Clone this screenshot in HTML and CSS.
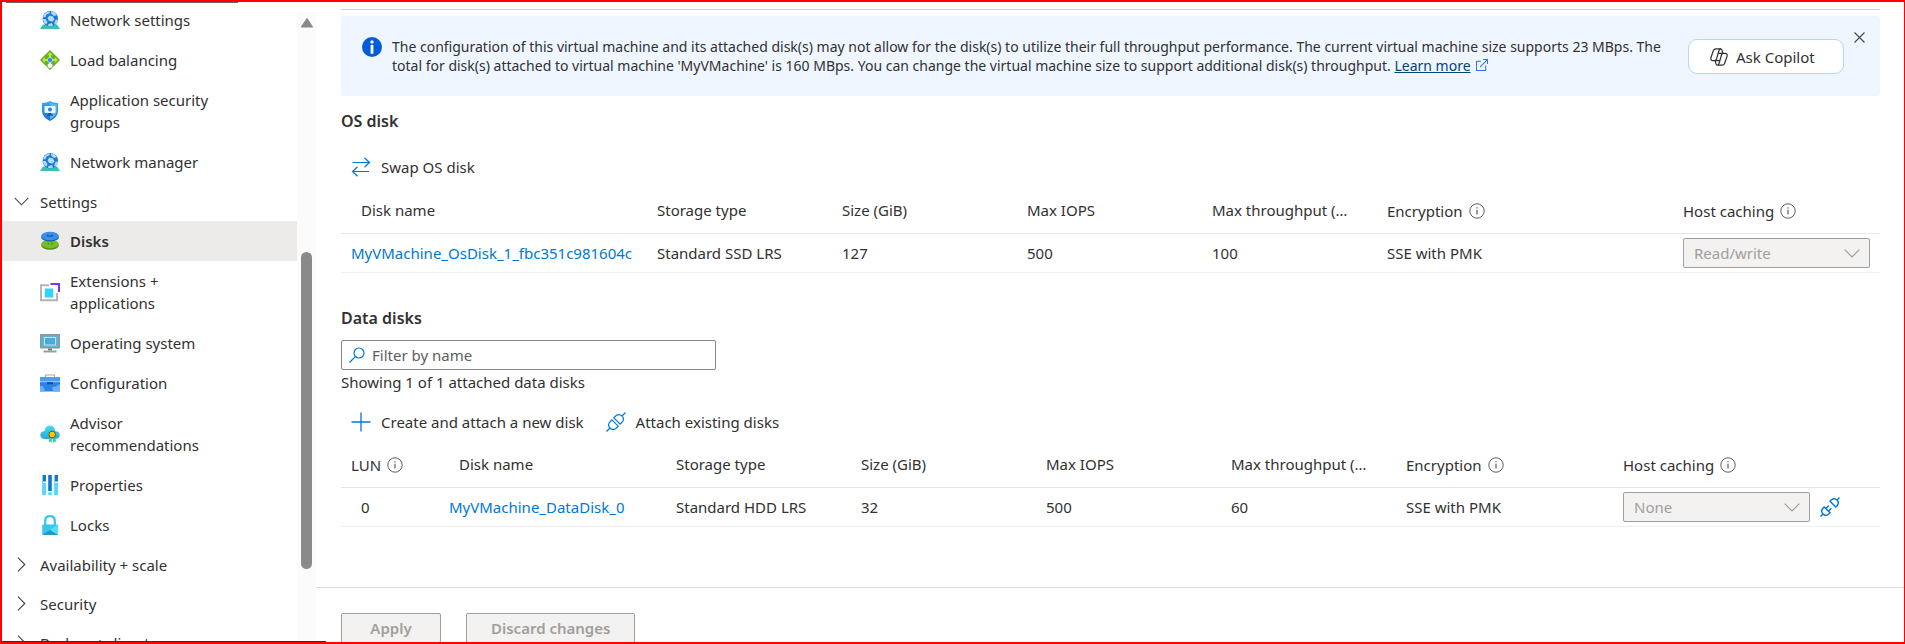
FILE: index.html
```html
<!DOCTYPE html>
<html lang="en">
<head>
<meta charset="utf-8">
<title>MyVMachine | Disks</title>
<link rel="stylesheet" href="styles.css">
</head>
<body>
<svg class="defs" aria-hidden="true">
  <defs>
    <linearGradient id="gCyan" x1="0" y1="0" x2="0" y2="1"><stop offset="0" stop-color="#45dcf7"/><stop offset="1" stop-color="#22a9d8"/></linearGradient>
    <linearGradient id="gShield" x1="0" y1="0" x2="0" y2="1"><stop offset="0" stop-color="#3fa9ee"/><stop offset="1" stop-color="#1673d8"/></linearGradient>
    <symbol id="globe" viewBox="0 0 20 18">
      <path d="M3 13.500h14l3 4.500H0z" fill="#37c2b1"/>
      <circle cx="10.300" cy="7.700" r="7.700" fill="#1b78d6"/>
      <path d="M4 3.500Q6.500.5 10 .2l-.5 2L6.500 3.500 5.500 6 3 6.500zM11.500.2Q15 .8 16.800 4L14 5 11 2.500zM9.500 4.500l3.500 1 1.500 3-2 2-3.500-.5-1.500-3zM3 8l2.500 0 2 3-1 2.500Q3 11.500 3 8zM8.500 13l3.500-1 1 2.500Q10.500 15.600 8 14.800zM14.500 11l1.500-2.500 1.800.5Q17 12.500 14.500 13.800z" fill="#b5dbfb"/>
    </symbol>
    <symbol id="info" viewBox="0 0 16 16">
      <circle cx="8" cy="8" r="7.200" fill="none" stroke="#605e5c"/><path d="M8 6.800v4.700M8 4.300v1.300" stroke="#605e5c" stroke-width="1.200"/>
    </symbol>
    <symbol id="down" viewBox="0 0 16 9"><path d="M.7.7 8 8 15.300.7" fill="none" stroke="currentColor" stroke-width="1.200"/></symbol>
    <symbol id="right" viewBox="0 0 9 16"><path d="M.7.7 8 8 .7 15.300" fill="none" stroke="currentColor" stroke-width="1.200"/></symbol>
    <symbol id="plug" viewBox="0 0 20 20">
      <g fill="none" stroke="#0078d4" stroke-width="1.200"><path d="M.5 19.500 4 16M16 4 19.500.5M5.800 7.800 12.200 14.200 9.500 16.700Q6.500 18.500 4 16T3.300 10.500zM7.800 5.800 14.200 12.200 16.700 9.500Q18.500 6.500 16 4T10.500 3.300z"/></g>
    </symbol>
    <symbol id="unplug" viewBox="0 0 20 20">
      <g fill="none" stroke="#0078d4" stroke-width="1.400"><path d="M.5 19.500 3 17M17 3 19.500.5M4.200 10 10 15.800 8.500 17.300Q5.500 19.500 3 17T2.700 11.500zM10 4.200 15.800 10l1.500-1.500Q19.500 5.500 17 3T11.500 2.700zM5.800 11.600l3-3M8.400 14.200l3-3"/></g>
    </symbol>
  </defs>
</svg>
<div class="shell">
  <nav class="sidebar" aria-label="Resource menu">
    <ul class="menu">
      <li><a class="item" href="#"><svg class="icon" viewBox="0 0 20 20"><use href="#globe" y="1" width="20" height="18"/></svg><span>Network settings</span></a></li>
      <li><a class="item" href="#"><svg class="icon" viewBox="0 0 20 20"><path d="M10 0 20 10 10 20 0 10z" fill="#67ad1d"/><path d="M10 2l3 3.200h-2v3H9v-3H7zM2 10l3.200-3v2h3v2h-3v2zM18 10l-3.200-3v2h-3v2h3v2z" fill="#b4ec36"/><path d="M9 11h2v2.500q2 .8 1.500 2.500Q12 18 10 18t-2.500-2q-.5-1.700 1.500-2.500z" fill="#fff"/><circle cx="10" cy="10" r="2.600" fill="#3b83e8" stroke="#c9e6ff" stroke-width=".8"/></svg><span>Load balancing</span></a></li>
      <li><a class="item" href="#"><svg class="icon" viewBox="0 0 20 20"><path d="M10 0Q13 2 18 2v8Q18 16 10 20 2 16 2 10V2Q7 2 10 0z" fill="url(#gShield)"/><path d="M10 1.500Q13 3 16.800 3.200V10Q16.500 15 10 18.500z" fill="#59b8f5"/><rect x="4.500" y="5" width="11" height="7" rx=".8" fill="#f2faff"/><circle cx="10" cy="8.500" r="2" fill="#2b7de0"/><path d="M8.700 12h2.600l.4 1.700H13v1H7v-1h1.300z" fill="#17549e"/></svg><span>Application security groups</span></a></li>
      <li><a class="item" href="#"><svg class="icon" viewBox="0 0 20 20"><use href="#globe" y="1" width="20" height="18"/></svg><span>Network manager</span></a></li>
      <li><button class="group" type="button"><span class="chev"><svg width="15" height="9"><use href="#down"/></svg></span>Settings</button></li>
      <li><a class="item selected" href="#" aria-current="page"><svg class="icon" viewBox="0 0 20 20"><ellipse cx="10" cy="14.500" rx="8.800" ry="4.200" fill="#4f8f17"/><ellipse cx="10" cy="13" rx="8.800" ry="4.300" fill="#78bd27"/><path d="M7.500 12.800h1.500M11 12.800h1.500" stroke="#3f7d12" stroke-width="1"/><ellipse cx="10" cy="6.200" rx="8.800" ry="4.300" fill="#0b64bd"/><ellipse cx="10" cy="5" rx="8.800" ry="4.200" fill="#3c8fe8"/><path d="M7 4l1 1h4l1-1" fill="none" stroke="#0b4f9c" stroke-width="1.200"/></svg><span>Disks</span></a></li>
      <li><a class="item" href="#"><svg class="icon" viewBox="0 0 20 20"><path d="M9 3.300H1v15h16V11" fill="none" stroke="#b3b3b3" stroke-width="1.900"/><rect x="4.800" y="6.500" width="8.500" height="9" fill="#32d4f5"/><path d="M10.500 2H19v8" fill="none" stroke="#773adc" stroke-width="2"/></svg><span>Extensions + applications</span></a></li>
      <li><a class="item" href="#"><svg class="icon" viewBox="0 0 20 20"><rect y="1" width="20" height="14.500" rx=".8" fill="#8f9599"/><rect x="1.500" y="2.500" width="17" height="11.500" fill="#5ab5dc"/><rect x="4.500" y="4.500" width="11" height="7.500" fill="#4ca9d6" stroke="#c6ecfa" stroke-width=".9"/><path d="M8 15.500h4v2H8z" fill="#777"/><path d="M3.500 17.500h13v2h-13z" fill="#9c9c9c"/></svg><span>Operating system</span></a></li>
      <li><a class="item" href="#"><svg class="icon" viewBox="0 0 20 20"><path d="M5.500 5V2h9v3" fill="none" stroke="#aaa" stroke-width="1.200"/><rect y="4" width="20" height="14.500" rx=".5" fill="#2a83e4"/><path d="M0 4h20v4.200H0z" fill="#4c9cf0"/><path d="M0 8.200h20v1H0z" fill="#a9d4ff"/><rect x="7" y="9.200" width="6" height="2" fill="#07509c"/><path d="M0 13q4-1 5 5.500H0zM12 15.500q1-3 4-1.500 1-3 4-2.500v7h-5q-2 0-3-3z" fill="#6bb0f6"/></svg><span>Configuration</span></a></li>
      <li><a class="item" href="#"><svg class="icon" viewBox="0 0 20 20"><path d="M4.500 15Q.3 14.500.3 11T4.500 7Q5.500 1.500 10 1.500T15.200 7Q19.700 7.500 19.700 11T15.500 15z" fill="url(#gCyan)"/><path d="M9.500 13h2.800l-.8 6-1.200-1.500L8.800 18.500zM12.300 13H15l1.200 5-1.600-.5-1.200 2z" fill="#35cdb9"/><circle cx="12.200" cy="10.500" r="3.300" fill="#ffca00" stroke="#5c4a1c" stroke-width=".9"/></svg><span>Advisor recommendations</span></a></li>
      <li><a class="item" href="#"><svg class="icon" viewBox="0 0 20 20"><path d="M2 0h4v6.500H2zM8.200 0h3.600v16H8.200zM14 0h4v6.500h-4z" fill="#0f77d0"/><path d="M2 8h4v12H2zM8.200 17.200h3.600V20H8.200zM14 8h4v12h-4z" fill="#50dcfa"/><path d="M2 0h1v20H2zM14 0h1v20h-1z" fill="#7bd3f5"/></svg><span>Properties</span></a></li>
      <li><a class="item" href="#"><svg class="icon" viewBox="0 0 20 20"><path d="M5.200 10V6Q5.200 1.200 10 1.200T14.800 6V10" fill="none" stroke="#35c8ec" stroke-width="2.300"/><rect x="2.200" y="9.500" width="15.600" height="10.500" rx=".8" fill="#35c8ec"/><path d="M17.800 9.500V20L10 15z" fill="#50e0fa"/><path d="M2.200 20 10 15l7.800 5z" fill="#1e9cc8"/></svg><span>Locks</span></a></li>
      <li><button class="group" type="button"><span class="chev"><svg width="9" height="15"><use href="#right"/></svg></span>Availability + scale</button></li>
      <li><button class="group" type="button"><span class="chev"><svg width="9" height="15"><use href="#right"/></svg></span>Security</button></li>
      <li><button class="group" type="button"><span class="chev"><svg width="9" height="15"><use href="#right"/></svg></span>Backup + disaster recovery</button></li>
    </ul>
    <div class="scrollbar" aria-hidden="true">
      <svg width="12" height="10" viewBox="0 0 12 10"><path d="M6 .8 11.300 8.800H.7z" fill="#8a8a8a" stroke="#8a8a8a" stroke-width="1.400" stroke-linejoin="round"/></svg>
      <div class="thumb"></div>
    </div>
  </nav>

  <main class="main">
    <div class="content">
      <section class="banner" aria-label="Disk throughput notice">
        <svg class="banner-icon" viewBox="0 0 20 20"><circle cx="10" cy="10" r="10" fill="#015cda"/><circle cx="10" cy="4.900" r="1.700" fill="#fff"/><path d="M8.600 7.800h2.800v9H8.600z" fill="#fff"/></svg>
        <p class="banner-text">The configuration of this virtual machine and its attached disk(s) may not allow for the disk(s) to utilize their full throughput performance. The current virtual machine size supports 23 MBps. The total for disk(s) attached to virtual machine 'MyVMachine' is 160 MBps. You can change the virtual machine size to support additional disk(s) throughput. <a href="#">Learn more</a> <svg class="ext" viewBox="0 0 13 13"><path d="M5.500 2.500H.6v9.900h9.900V7M7.500.6h4.900v4.900M12.400.6 4.500 8.500" fill="none" stroke="#2a74d8" stroke-width="1.100"/></svg></p>
        <button class="copilot" type="button"><svg width="18" height="18" viewBox="0 0 18 18"><g fill="none" stroke="#323130" stroke-width="1.200" stroke-linejoin="round"><path d="M12.800 5.300 12 2.200Q11.600.8 10.300.8H5.800Q4 .8 3.300 2.800L1 9.500Q.2 12.700 3 12.700H4.500Q6 12.700 6.500 11L9 2.500Q9.500.8 10.800.8"/><path d="M5.200 12.700 6 15.800Q6.400 17.200 7.700 17.200H12.200Q14 17.200 14.700 15.200L17 8.500Q17.800 5.300 15 5.300H13.500Q12 5.300 11.500 7L9 15.500Q8.500 17.200 7.200 17.200"/><path d="M8.200 5.300h5.300M4.500 12.700h5.300"/></g></svg>Ask Copilot</button>
        <button class="close" type="button" aria-label="Dismiss"><svg width="11" height="11" viewBox="0 0 11 11"><path d="M.5.5l10 10M10.500.5l-10 10" stroke="#484644" stroke-width="1.100"/></svg></button>
      </section>

      <h2 class="title">OS disk</h2>
      <div class="toolbar">
        <button type="button"><svg width="20" height="20" viewBox="0 0 20 20"><path d="M1.500 5.500h17M13.500.8l5 4.700-5 4.700M18 14.500H1.500M6.500 9.800l-5 4.700 5 4.700" fill="none" stroke="#0078d4" stroke-width="1.200"/></svg>Swap OS disk</button>
      </div>
      <table class="grid">
        <colgroup><col class="w-osname"><col class="w-std"><col class="w-std"><col class="w-std"><col class="w-tput"><col class="w-osenc"><col></colgroup>
        <thead><tr><th class="in">Disk name</th><th>Storage type</th><th>Size (GiB)</th><th>Max IOPS</th><th class="trim">Max throughput (MBps)</th><th><span class="tip">Encryption <svg><use href="#info"/></svg></span></th><th><span class="tip">Host caching <svg><use href="#info"/></svg></span></th></tr></thead>
        <tbody><tr><td><a href="#" class="clip">MyVMachine_OsDisk_1_fbc351c981604c</a></td><td>Standard SSD LRS</td><td>127</td><td>500</td><td>100</td><td>SSE with PMK</td><td><div class="host"><span class="select"><select disabled aria-label="OS disk host caching"><option>Read/write</option></select><svg><use href="#down"/></svg></span></div></td></tr></tbody>
      </table>

      <h2 class="title second">Data disks</h2>
      <label class="filter"><svg width="16" height="16" viewBox="0 0 16 16"><circle cx="10" cy="6" r="5" fill="none" stroke="#0078d4" stroke-width="1.200"/><path d="M6.300 9.700.5 15.500" stroke="#0078d4" stroke-width="1.200"/></svg><input type="text" placeholder="Filter by name" aria-label="Filter by name"></label>
      <p class="count">Showing 1 of 1 attached data disks</p>
      <div class="toolbar data">
        <button type="button"><svg width="20" height="20" viewBox="0 0 20 20"><path d="M10 .5v19M.5 10h19" stroke="#0078d4" stroke-width="1.300"/></svg>Create and attach a new disk</button>
        <button type="button"><svg width="20" height="20"><use href="#plug"/></svg>Attach existing disks</button>
      </div>
      <table class="grid">
        <colgroup><col class="w-lun"><col class="w-dname"><col class="w-std"><col class="w-std"><col class="w-std"><col class="w-tput"><col class="w-denc"><col></colgroup>
        <thead><tr><th><span class="tip">LUN <svg><use href="#info"/></svg></span></th><th class="in">Disk name</th><th>Storage type</th><th>Size (GiB)</th><th>Max IOPS</th><th class="trim">Max throughput (MBps)</th><th><span class="tip">Encryption <svg><use href="#info"/></svg></span></th><th><span class="tip">Host caching <svg><use href="#info"/></svg></span></th></tr></thead>
        <tbody><tr><td class="in">0</td><td><a href="#" class="clip">MyVMachine_DataDisk_0</a></td><td>Standard HDD LRS</td><td>32</td><td>500</td><td>60</td><td>SSE with PMK</td><td><div class="host"><span class="select"><select disabled aria-label="Data disk host caching"><option>None</option></select><svg><use href="#down"/></svg></span><button class="detach" type="button" aria-label="Detach"><svg width="20" height="20"><use href="#unplug"/></svg></button></div></td></tr></tbody>
      </table>
    </div>
    <footer class="footer">
      <button type="button" disabled>Apply</button>
      <button type="button" disabled>Discard changes</button>
    </footer>
  </main>
  <div class="edge edge-top"></div>
  <div class="edge edge-bottom"></div>
</div>
</body>
</html>
```

FILE: styles.css
```css
* { box-sizing: border-box; }

body {
  margin: 0;
  font-family: "Noto Sans", "Open Sans", sans-serif;
  font-size: 15px;
  line-height: 22px;
  color: #323130;
  background: #fff;
}

button, input, select { font: inherit; color: inherit; }
button { padding: 0; border: 0; background: none; text-align: left; white-space: nowrap; }
svg { flex: none; display: block; }
.defs { position: absolute; width: 0; height: 0; }

.shell {
  position: relative;
  display: flex;
  height: 100vh;
  overflow: hidden;
}
.shell::after {
  content: "";
  position: absolute;
  inset: 0;
  border: 2px solid #f00;
  border-right-width: 1px;
  pointer-events: none;
}
.edge { position: absolute; height: 1px; }
.edge-top { top: 2px; left: 6px; width: 232px; background: #666; }
.edge-bottom { bottom: 2px; left: 2px; width: 324px; background: #333; }

/* Resource menu */
.sidebar { display: flex; width: 316px; flex: none; }
.menu { flex: 1; margin: 0; padding: 0 0 0 2px; list-style: none; }
.item {
  display: flex;
  align-items: center;
  gap: 10px;
  padding: 9px 64px 9px 38px;
  color: inherit;
  text-decoration: none;
}
.selected { background: #edebe9; font-weight: 600; }
.icon { width: 20px; height: 20px; }
.group { display: flex; align-items: center; width: 100%; height: 39px; }
.chev { display: flex; justify-content: center; width: 38px; color: #484644; }
.scrollbar {
  display: flex;
  flex-direction: column;
  align-items: center;
  width: 19px;
  margin-top: 12px;
  padding-top: 6px;
  background: #fbfbfb;
}
.thumb {
  width: 11px;
  height: 317px;
  margin-top: 224px;
  border-radius: 6px;
  background: #8a8a8a;
}

/* Content */
.main { flex: 1; min-width: 0; display: flex; flex-direction: column; }
.content { flex: 1; margin: 9px 25px 0 25px; border-top: 1px solid #d2d0ce; }

.banner {
  display: flex;
  align-items: flex-start;
  min-height: 80px;
  margin-top: 6px;
  padding: 16px 15px 16px 21px;
  border-radius: 3px;
  background: #eff6ff;
}
.banner-icon { width: 20px; height: 20px; margin-top: 5px; }
.banner-text { flex: 1; margin: 5px 8px 0 10px; font-size: 14px; line-height: 19px; }
.banner-text a { color: #004578; }
.ext { display: inline-block; width: 12px; height: 12px; margin-left: 2px; }
.copilot {
  display: flex;
  align-items: center;
  gap: 8px;
  width: 156px;
  height: 35px;
  margin-top: 7px;
  padding-left: 21px;
  border: 1px solid #b4d6fa;
  border-radius: 9px;
  background: #fff;
}
.close { margin-left: 10px; }

.title { margin: 14px 0 0; font-size: 16px; font-weight: 600; line-height: 22px; }
.title.second { margin-top: 34px; }

.toolbar { display: flex; gap: 22px; margin-top: 15px; padding-left: 10px; }
.toolbar button { display: flex; align-items: center; gap: 10px; height: 40px; }
.toolbar.data { margin-top: 9px; }

.grid { width: 100%; table-layout: fixed; border-collapse: collapse; }
.w-osname { width: 306px; }
.w-std { width: 185px; }
.w-tput { width: 175px; }
.w-osenc { width: 296px; }
.w-lun { width: 98px; }
.w-dname { width: 227px; }
.w-denc { width: 217px; }
.grid th, .grid td {
  padding: 0 10px;
  font-weight: 400;
  text-align: left;
  white-space: nowrap;
  overflow: hidden;
  text-overflow: ellipsis;
}
.grid th { height: 46px; border-bottom: 1px solid #e6e6e6; }
.grid td { height: 39px; border-bottom: 1px solid #f0f0f0; }
.grid .in { padding-left: 20px; }
.grid .trim { padding-right: 26px; }
.grid a { color: #0078d4; text-decoration: none; }
.clip { display: block; overflow: hidden; white-space: nowrap; }
.tip { display: flex; align-items: center; gap: 6px; padding-top: 2px; }
.tip svg { width: 16px; height: 16px; }

.host { display: flex; align-items: center; gap: 10px; }
.select { position: relative; width: 187px; }
.select select {
  display: block;
  width: 100%;
  height: 30px;
  padding: 0 10px;
  border: 1px solid #a19f9d;
  border-radius: 2px;
  background: #f3f2f1;
  color: #a19f9d;
  opacity: 1;
  appearance: none;
}
.select svg { position: absolute; top: 11px; right: 10px; width: 16px; height: 9px; color: #a19f9d; }

.filter {
  display: flex;
  align-items: center;
  gap: 7px;
  width: 375px;
  height: 30px;
  margin-top: 11px;
  padding: 0 7px;
  border: 1px solid #8a8886;
  border-radius: 2px;
}
.filter input { flex: 1; min-width: 0; padding: 0; border: 0; outline: 0; background: none; }
.filter input::placeholder { color: #605e5c; opacity: 1; }
.count { margin: 1px 0 0; }

.footer {
  display: flex;
  gap: 25px;
  padding: 25px 25px 1px;
  border-top: 1px solid #dcdcdc;
}
.footer button {
  min-width: 100px;
  height: 30px;
  padding: 0 24px;
  border: 1px solid #a19f9d;
  border-radius: 2px;
  background: #f3f2f1;
  color: #a19f9d;
  font-weight: 600;
  text-align: center;
}
```
